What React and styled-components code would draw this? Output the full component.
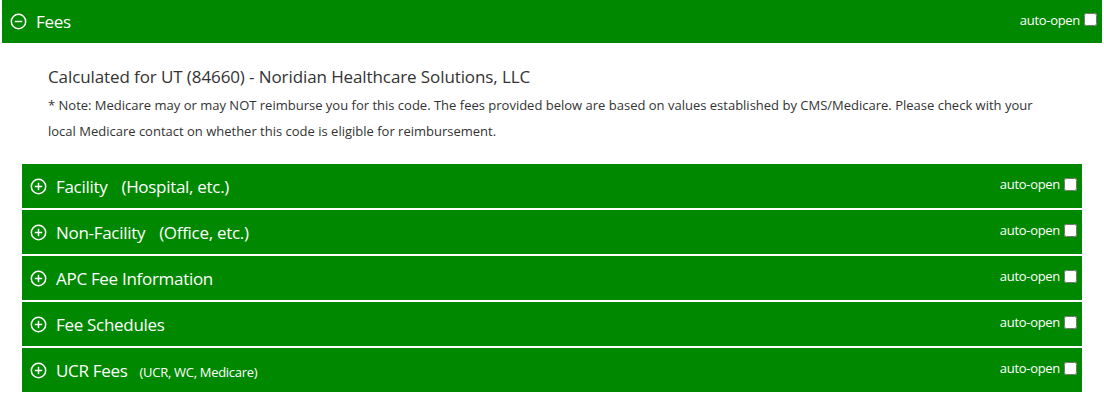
import React from 'react';
import styled, { createGlobalStyle } from 'styled-components';

const GlobalStyle = createGlobalStyle`
    body {
        margin: 0;
        background: #fff;
        font-family: "Open Sans", "Noto Sans", sans-serif;
    }
`;

const Page = styled.div`
    padding: 0 2px;
`;

const Bar = styled.div`
    display: flex;
    align-items: center;
    justify-content: space-between;
    height: ${props => props.tall ? '43px' : '44px'};
    background: #008800;
    color: #fff;
    padding: 0 5px 0 8px;
`;

const BarTitle = styled.div`
    display: flex;
    align-items: center;
    gap: 9px;
    font-size: 17px;
    letter-spacing: -0.3px;
`;

const Sub = styled.span`
    margin-left: ${props => props.small ? '12px' : '14px'};
    font-size: ${props => props.small ? '13px' : '17px'};
`;

const AutoOpen = styled.label`
    display: flex;
    align-items: center;
    gap: 4px;
    font-size: 13px;
    letter-spacing: -0.3px;
    margin-top: -4px;
`;

const Check = styled.input`
    width: 13px;
    height: 13px;
    margin: 0;
`;

const Body = styled.div`
    padding: 22px 0 0 46px;
    color: #333;
`;

const Heading = styled.div`
    font-size: 17px;
    letter-spacing: -0.1px;
    line-height: 24px;
`;

const Note = styled.div`
    font-size: 13px;
    line-height: 26px;
    margin-top: 3px;
    padding-right: 50px;
`;

const Panels = styled.div`
    display: flex;
    flex-direction: column;
    gap: 2px;
    margin: 20px 20px 0;
`;

const CircleIcon = ({ plus }) => (
    <svg width="17" height="17" viewBox="0 0 17 17" fill="none" stroke="#fff" strokeWidth="1.5">
        <circle cx="8.5" cy="8.5" r="7.2" />
        <line x1="4.8" y1="8.5" x2="12.2" y2="8.5" />
        {plus && <line x1="8.5" y1="4.8" x2="8.5" y2="12.2" />}
    </svg>
);

const panels = [
    { title: 'Facility', sub: '(Hospital, etc.)' },
    { title: 'Non-Facility', sub: '(Office, etc.)' },
    { title: 'APC Fee Information' },
    { title: 'Fee Schedules' },
    { title: 'UCR Fees', sub: '(UCR, WC, Medicare)', small: true },
];

const App = () => {
    return (
        <Page>
            <GlobalStyle />
            <Bar tall>
                <BarTitle>
                    <CircleIcon />
                    <span>Fees</span>
                </BarTitle>
                <AutoOpen>auto-open <Check type="checkbox" /></AutoOpen>
            </Bar>
            <Body>
                <Heading>Calculated for UT (84660) - Noridian Healthcare Solutions, LLC</Heading>
                <Note>
                    * Note: Medicare may or may NOT reimburse you for this code. The fees provided below are based on values established by CMS/Medicare. Please check with your local Medicare contact on whether this code is eligible for reimbursement.
                </Note>
            </Body>
            <Panels>
                {panels.map(p => (
                    <Bar key={p.title}>
                        <BarTitle>
                            <CircleIcon plus />
                            <span>
                                {p.title}
                                {p.sub && <Sub small={p.small}>{p.sub}</Sub>}
                            </span>
                        </BarTitle>
                        <AutoOpen>auto-open <Check type="checkbox" /></AutoOpen>
                    </Bar>
                ))}
            </Panels>
        </Page>
    );
};

export default App;
